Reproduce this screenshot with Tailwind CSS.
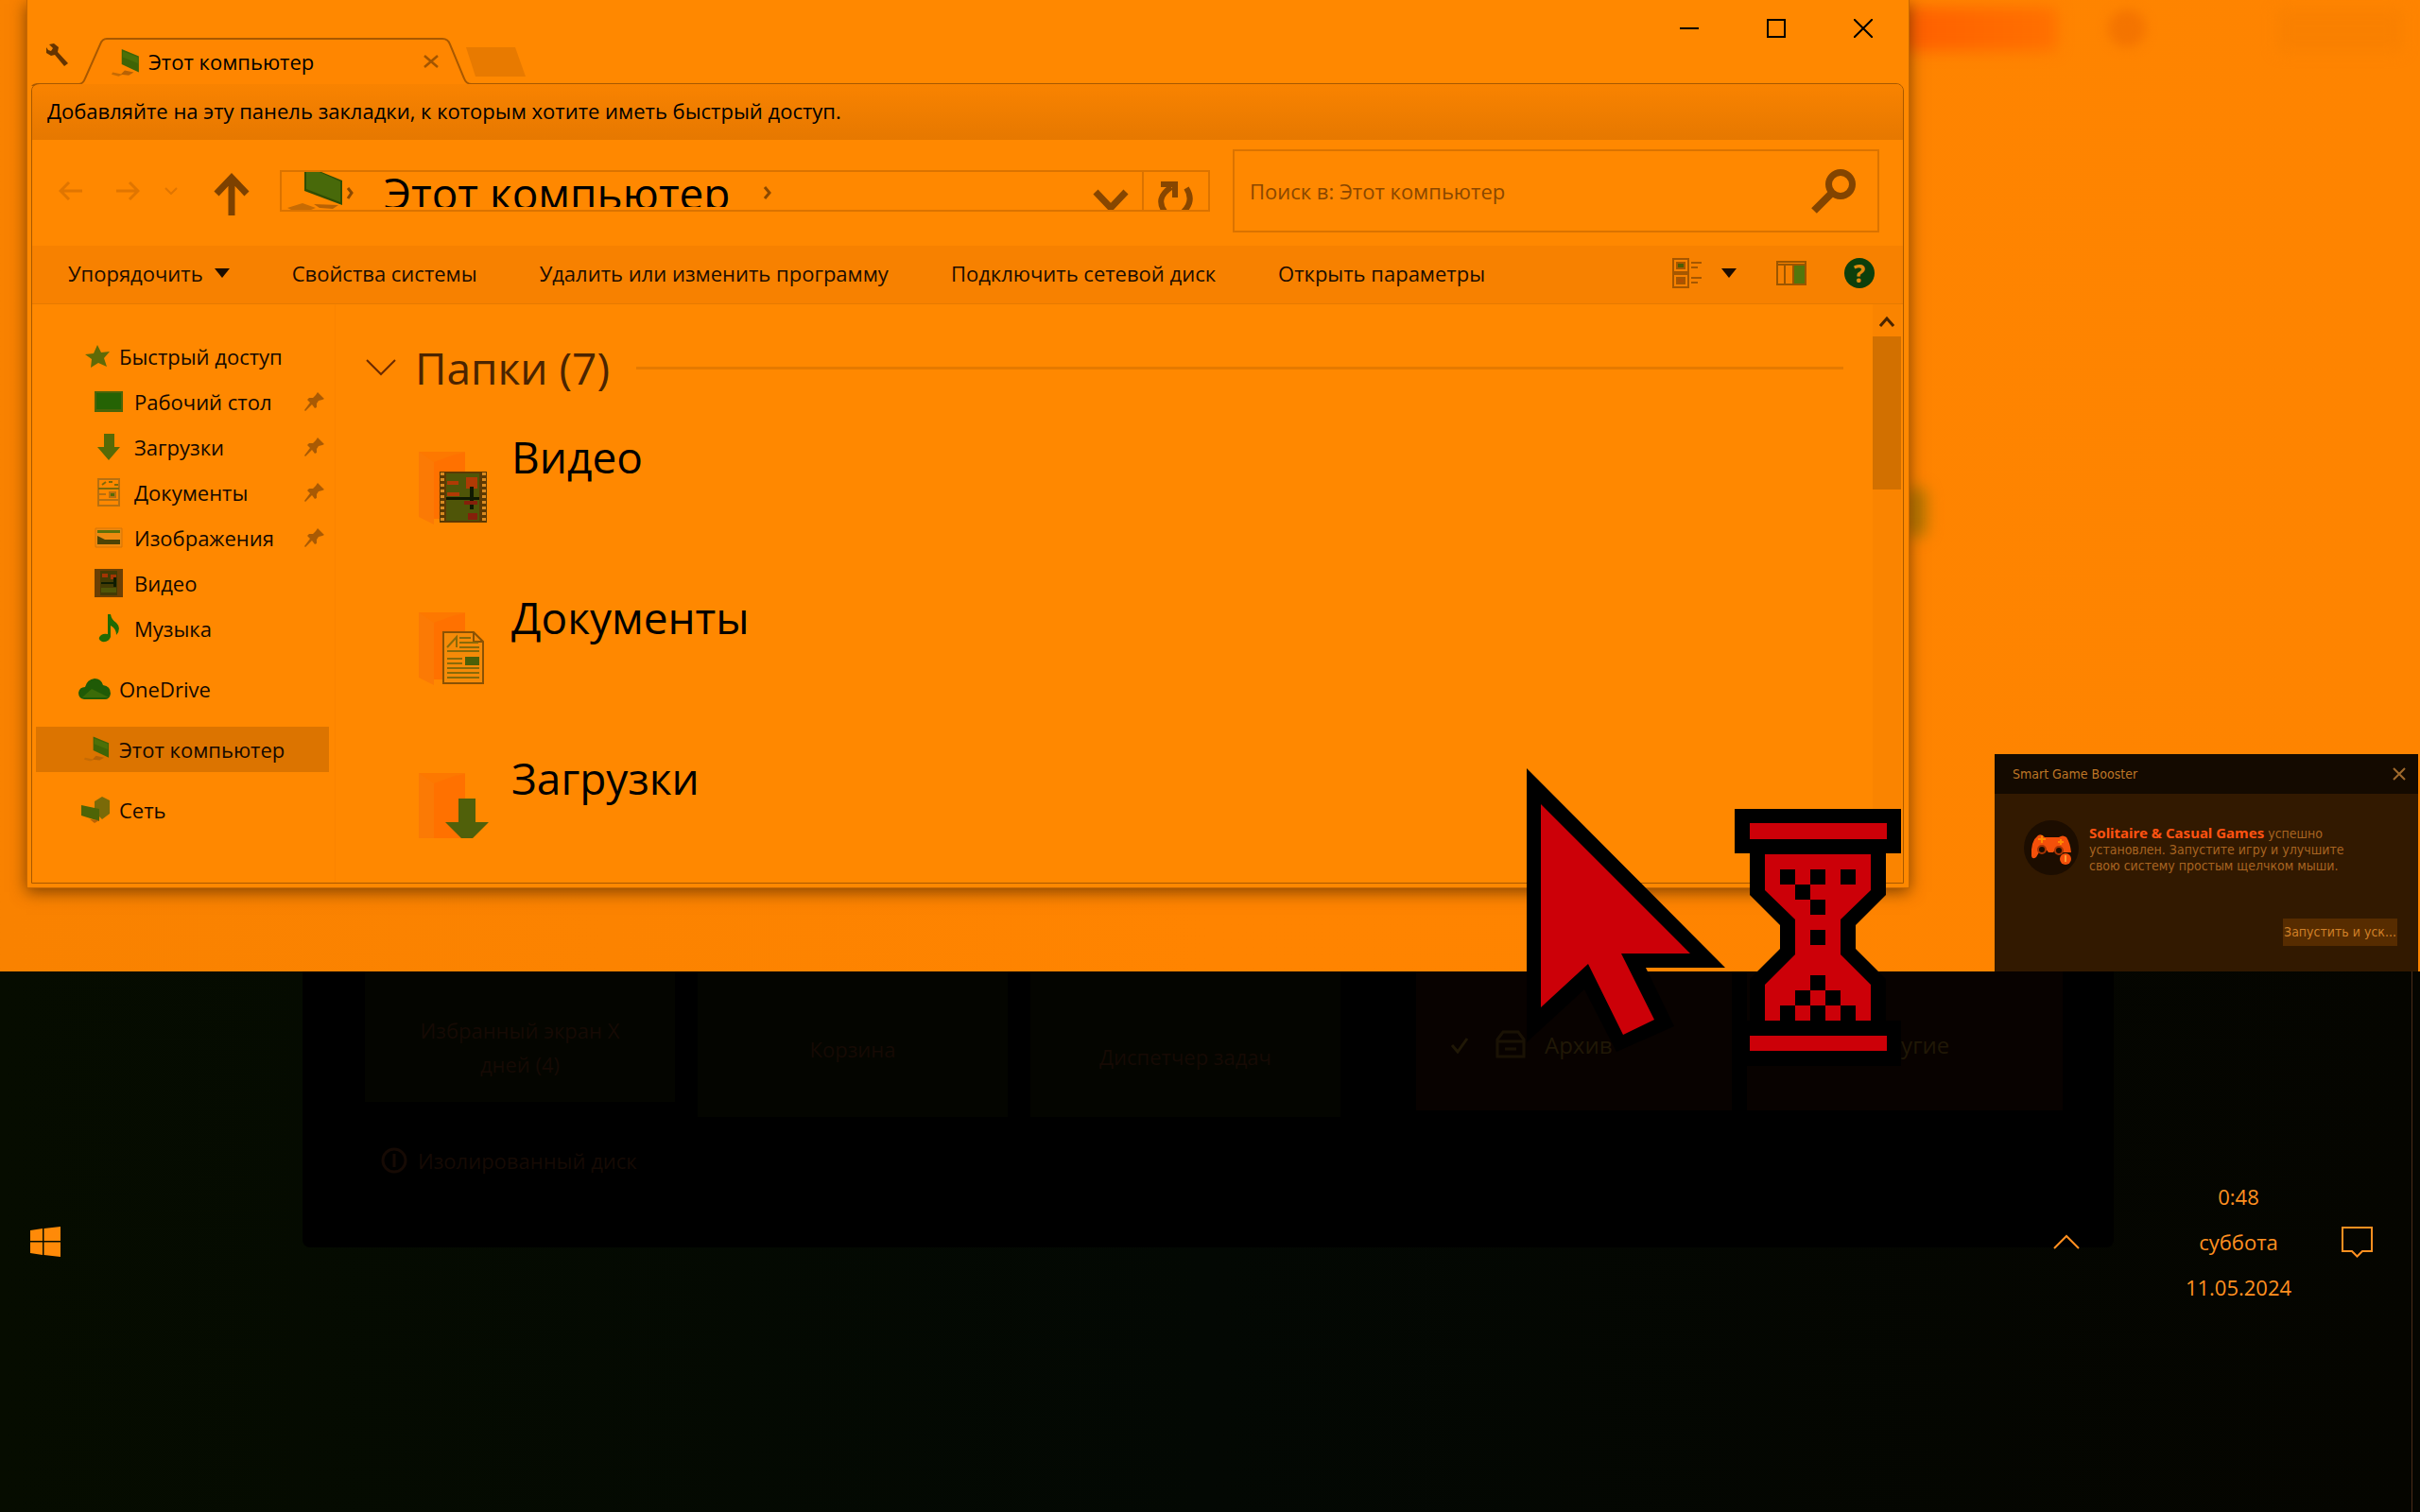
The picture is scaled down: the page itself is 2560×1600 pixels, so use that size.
<!DOCTYPE html>
<html lang="ru">
<head>
<meta charset="utf-8">
<title>Этот компьютер</title>
<script src="https://cdn.jsdelivr.net/npm/@tailwindcss/browser@4"></script>
</head>
<body class="relative flex min-h-screen flex-col overflow-hidden bg-[#050500] font-['Open_Sans','Noto_Sans',sans-serif] text-[22px] leading-[48px] text-[#1c0c00]">

<svg class="hidden" aria-hidden="true">
  <symbol id="pc" viewBox="0 0 30 30">
    <path d="M11 1 28 8v16L11 16z" fill="#3f6406"/><path d="M12 3 27 9v6L12 9z" fill="#4c7008"/>
    <path d="M14 22l9 2-5 3-8-1z" fill="#b86205"/><path d="M2 24l10 2-4 2-7-2z" fill="#c66b04"/>
  </symbol>
  <symbol id="pin" viewBox="0 0 22 22"><path d="M14 1l7 7-2 1-4 1-2 3v4l-2 1-3-4-7 7-1-1 6-8-3-3 2-2 4 0 3-3z" fill="#a95a04"/></symbol>
  <symbol id="folder" viewBox="0 0 52 84">
    <path d="M2 3h49v65H18z" fill="#fd7800"/><path d="M18 14 40 6l11-2v70H18z" fill="#ff7100"/><path d="M2 3 18 14v66L2 72z" fill="#fb7a05"/>
  </symbol>
</svg>

<!-- desktop -->
<main class="relative h-[1028px] overflow-hidden bg-gradient-to-r from-[#f98200] via-[#ff8400] to-[#fe8400]">
  <div class="absolute top-[8px] right-[384px] h-[46px] w-[170px] rounded-md bg-gradient-to-r from-[#ff5f00] to-[#ff7000] blur-[8px]"></div>
  <div class="absolute top-[10px] right-[290px] h-[40px] w-[40px] rounded-full bg-[#f47400] blur-[6px]"></div>
  <div class="absolute top-[10px] right-[20px] h-[44px] w-[130px] bg-[#f98000] blur-[8px]"></div>
  <div class="absolute top-[515px] right-[522px] h-[54px] w-[22px] rounded-full bg-[#b07400] blur-[8px]"></div>

  <!-- explorer window -->
  <section class="absolute top-0 right-[540px] left-[28px] flex h-[940px] flex-col border-r border-b border-l border-[#c86800] bg-[#ff8800] pr-[5px] pb-[4px] pl-[4px] shadow-[0_4px_16px_rgba(80,40,0,0.7)]">
    <header class="relative flex h-[88px] shrink-0">
      <svg class="absolute top-[39px] left-0" width="540" height="52" viewBox="0 0 540 52" fill="none">
        <path d="M460 11h52l11 31h-53z" fill="#e87a00"/>
        <path d="M0 58v-2q0-6 8-6h42q5 0 7-6L73 8q2-6 7-6h355q6 0 8 6l15 36q2 6 8 6h80" fill="#ff8600" stroke="#a85800" stroke-width="2"/>
      </svg>
      <svg class="relative mt-[45px] ml-[14px]" width="26" height="26" viewBox="0 0 26 26" fill="none"><path d="M2 5v6l5 3 4-1 10 12 4-3L14 10l1-5-5-4-5 1 4 4-2 3-3-1z" fill="#653400"/></svg>
      <div class="relative mt-[41px] ml-[44px] flex h-[48px] w-[347px] items-center text-black">
        <svg width="32" height="32" class="mt-1"><use href="#pc"/></svg>
        <span class="ml-[8px]">Этот компьютер</span>
        <button class="ml-auto p-0" aria-label="Закрыть вкладку"><svg width="16" height="14" viewBox="0 0 16 14"><path d="M1 1l14 12M15 1L1 13" stroke="#a35500" stroke-width="2.5"/></svg></button>
      </div>
      <div class="ml-auto flex h-[60px] items-center gap-[72px] pr-[33px]">
        <button aria-label="Свернуть"><svg width="20" height="20"><path d="M0 10h20" stroke="#000" stroke-width="2"/></svg></button>
        <button aria-label="Развернуть"><svg width="20" height="20"><path d="M1 1h18v18H1z" fill="none" stroke="#000" stroke-width="2"/></svg></button>
        <button aria-label="Закрыть"><svg width="20" height="20"><path d="M0 0l20 20M20 0L0 20" stroke="#000" stroke-width="2"/></svg></button>
      </div>
    </header>

    <div class="flex min-h-0 flex-1 flex-col rounded-t-lg border border-[#a85800]">
      <p class="relative h-[59px] shrink-0 overflow-hidden rounded-t-lg bg-gradient-to-b from-[#f98300] to-[#e67800] pl-[16px] leading-[57px] text-black">Добавляйте на эту панель закладки, к которым хотите иметь быстрый доступ.</p>

      <nav class="flex h-[112px] shrink-0 items-center pr-[25px] pb-[4px] pl-[28px]">
        <button aria-label="Назад"><svg width="26" height="20" viewBox="0 0 26 20" fill="none" stroke="#e07500" stroke-width="3"><path d="M25 10H3M11 1L2 10l9 9"/></svg></button>
        <button class="ml-[34px]" aria-label="Вперёд"><svg width="26" height="20" viewBox="0 0 26 20" fill="none" stroke="#e07500" stroke-width="3"><path d="M1 10h22M15 1l9 9-9 9"/></svg></button>
        <button class="ml-[26px]" aria-label="Последние расположения"><svg width="14" height="8" viewBox="0 0 14 8" fill="none" stroke="#e07500" stroke-width="2"><path d="M1 1l6 6 6-6"/></svg></button>
        <button class="mt-[6px] ml-[38px]" aria-label="Вверх"><svg width="38" height="46" viewBox="0 0 38 46" fill="none" stroke="#7d4100" stroke-width="7"><path d="M19 46V6M3 23L19 6l16 17"/></svg></button>
        <div class="ml-[32px] flex h-[44px] min-w-0 flex-1 overflow-hidden border-2 border-[#db7300]">
          <svg class="ml-[6px] shrink-0" width="72" height="42" viewBox="0 0 72 42"><path d="M18 0h18l22 9v26L18 20z" fill="#2f4d04"/><path d="M20 0h14l22 10v22L20 18z" fill="#48690a"/><path d="M64 17l4 5-4 6" fill="none" stroke="#8c4900" stroke-width="3"/><path d="M28 34l26 1-6 4-14-1z" fill="#b86205"/><path d="M0 38l16-5 14 5-10 4H8z" fill="#c66b04"/></svg>
          <span class="ml-[30px] h-[37px] overflow-hidden text-[46px] leading-[64px] whitespace-nowrap text-black"><span class="block -mt-[10px]">Этот компьютер</span></span>
          <svg class="mt-[15px] ml-[34px] shrink-0" width="10" height="14" fill="none" stroke="#8c4900" stroke-width="3"><path d="M2 1l5 6-5 6"/></svg>
          <button class="ml-auto mr-[14px] shrink-0" aria-label="Журнал"><svg width="38" height="40" viewBox="0 0 38 40"><path d="M3 21l16 17 16-17" fill="none" stroke="#874600" stroke-width="7"/></svg></button>
          <button class="flex w-[70px] shrink-0 justify-center border-l-2 border-[#db7300]" aria-label="Обновить"><svg width="42" height="40" viewBox="0 0 42 40" fill="none" stroke="#874600" stroke-width="6"><path d="M10 43Q-2 28 16 16M32 17q9 14-4 26M5 13h15v14"/></svg></button>
        </div>
        <div class="ml-[24px] flex h-[88px] w-[684px] shrink-0 items-center border-2 border-[#db7300] pr-[22px] pl-[16px]">
          <input class="min-w-0 flex-1 bg-transparent outline-none placeholder:text-[#8a4700] placeholder:opacity-100" type="text" aria-label="Поиск" placeholder="Поиск в: Этот компьютер">
          <svg width="48" height="48" viewBox="0 0 48 48" fill="none" stroke="#834400"><circle cx="31" cy="17" r="12.500" stroke-width="7"/><path d="M22 26L3 45" stroke-width="8"/></svg>
        </div>
      </nav>

      <div class="flex h-[62px] shrink-0 items-center border-b border-[#e67a00] bg-[#f78100] pr-[30px] pb-[3px] pl-[38px]">
        <button class="flex items-center gap-[12px]">Упорядочить<svg width="16" height="10"><path d="M0 0h16l-8 10z" fill="#1c0c00"/></svg></button>
        <button class="ml-[66px]">Свойства системы</button>
        <button class="ml-[66px]">Удалить или изменить программу</button>
        <button class="ml-[66px]">Подключить сетевой диск</button>
        <button class="ml-[66px]">Открыть параметры</button>
        <button class="ml-auto flex items-center gap-[20px]" aria-label="Вид"><svg width="32" height="32" viewBox="0 0 32 32" fill="none" stroke="#a65700" stroke-width="2"><path d="M1 1h16v14H1zM1 17h16v14H1zM20 5h11M20 10h7M20 21h11M20 26h7"/><path d="M5 5h8v6H5z" fill="#4e5d04"/><path d="M5 21h8v6H5z" fill="#b04f00"/></svg><svg width="16" height="10"><path d="M0 0h16l-8 10z" fill="#1c0c00"/></svg></button>
        <button class="ml-[42px]" aria-label="Область просмотра"><svg width="32" height="26" viewBox="0 0 32 26" fill="none" stroke="#9c5600" stroke-width="2"><path d="M1 1h30v24H1zM1 4h30M9 4v21M18 4v21"/><path d="M19 5h11v19H19z" fill="#52760c" stroke="none"/></svg></button>
        <button class="ml-[40px] h-[32px] w-[32px] rounded-full bg-[#0d3f0b] text-[26px] leading-[32px] font-bold text-[#e08a10]" aria-label="Справка">?</button>
      </div>

      <div class="flex min-h-0 flex-1">
        <aside class="w-[321px] shrink-0 border-r border-[#fb8400] pt-[31px] pr-[6px] pl-[4px] text-[#140800]">
          <ul>
            <li class="flex h-[48px] items-center pl-[51px]"><svg width="28" height="26" viewBox="0 0 28 26"><path d="M14 1l4 8 9-1-6 7 3 9-9-4-8 5 1-9-7-5 9-1z" fill="#5f6a07"/></svg><a href="#" class="ml-[9px]">Быстрый доступ</a></li>
            <li class="flex h-[48px] items-center pr-[4px] pl-[62px]"><svg width="30" height="24"><path d="M0 1h30v22H0z" fill="#4a6408"/><path d="M2 3h26v17H2z" fill="#256304"/></svg><a href="#" class="ml-[12px]">Рабочий стол</a><svg class="ml-auto" width="22" height="22"><use href="#pin"/></svg></li>
            <li class="flex h-[48px] items-center pr-[4px] pl-[62px]"><svg width="30" height="28"><path d="M10 0h11v14h6L15 28 3 14h7z" fill="#566a06"/></svg><a href="#" class="ml-[12px]">Загрузки</a><svg class="ml-auto" width="22" height="22"><use href="#pin"/></svg></li>
            <li class="flex h-[48px] items-center pr-[4px] pl-[62px]"><svg width="30" height="32" fill="none" stroke="#b87010" stroke-width="2"><path d="M4 2h22v28H4zM4 18h8M4 24h22"/><path d="M4 12h22M8 8l4-3M15 5h4M21 8h4" stroke="#806a08"/><path d="M16 16h6v5h-6z" fill="#566a06"/></svg><a href="#" class="ml-[12px]">Документы</a><svg class="ml-auto" width="22" height="22"><use href="#pin"/></svg></li>
            <li class="flex h-[48px] items-center pr-[4px] pl-[62px]"><svg width="30" height="22"><path d="M1 1h28v20H1z" fill="#ee8a10" stroke="#d87505"/><path d="M3 3h24v3H3z" fill="#607008"/><path d="M3 9l8 4h16v5H3z" fill="#4e4405"/></svg><a href="#" class="ml-[12px]">Изображения</a><svg class="ml-auto" width="22" height="22"><use href="#pin"/></svg></li>
            <li class="flex h-[48px] items-center pl-[62px]"><svg width="30" height="30"><path d="M0 0h30v30H0z" fill="#6b3f04"/><path d="M6 2h18v26H6z" fill="#433b04"/><path d="M8 5h6v4H8zM17 6h6v5h-6z" fill="#a43404"/><path d="M7 14h16v2H7zM20 9h3v10h-3z" fill="#0e1c02"/><path d="M7 20h16v5H7z" fill="#4f5508"/></svg><a href="#" class="ml-[12px]">Видео</a></li>
            <li class="flex h-[48px] items-center pl-[62px]"><svg width="30" height="30"><path d="M14 0h3q1 6 6 9 6 6 0 13 0-7-6-10v12q-2 6-9 5-6-3-1-7 3-2 7-1z" fill="#1f6a04"/></svg><a href="#" class="ml-[12px]">Музыка</a></li>
            <li class="mt-[16px] flex h-[48px] items-center pl-[45px]"><svg width="34" height="22" viewBox="0 0 34 22"><path d="M6 22q-6-1-6-7 1-6 7-6 2-8 10-9 7 0 9 7 8 1 8 9-1 6-6 6z" fill="#1f5a06"/><path d="M4 20l10-9 18 9z" fill="#3a6b08"/></svg><a href="#" class="ml-[9px]">OneDrive</a></li>
            <li class="mt-[16px] flex h-[48px] items-center bg-[#dc7400] pl-[50px]"><svg width="29" height="30"><use href="#pc"/></svg><a href="#" class="ml-[9px]">Этот компьютер</a></li>
            <li class="mt-[16px] flex h-[48px] items-center pl-[48px]"><svg width="31" height="30" viewBox="0 0 31 30"><path d="M14 6l8-5 8 4v14l-8 6-8-8z" fill="#7a6a08"/><path d="M0 10l19 4v13L0 21z" fill="#4d6406"/><path d="M9 25l10 1-5 3z" fill="#b86205"/></svg><a href="#" class="ml-[9px]">Сеть</a></li>
          </ul>
        </aside>

        <div class="flex h-[565px] min-w-0 flex-1 flex-col overflow-hidden pt-[33px] pr-[31px] pl-[32px] text-[46px] leading-[68px] text-black">
          <h2 class="flex h-[68px] shrink-0 items-center text-[#4b2400]">
            <svg width="32" height="18" fill="none" stroke="#6b2a00" stroke-width="2"><path d="M1 1l15 15L31 1"/></svg>
            <span class="ml-[20px]">Папки (7)</span><span class="ml-[28px] h-[3px] flex-1 bg-[#e67a00]"></span>
          </h2>
          <article class="mt-[26px] flex h-[170px] shrink-0 pl-[54px]">
            <svg class="mt-[26px] shrink-0" width="80" height="88" viewBox="0 0 80 88"><use href="#folder" width="52" height="84"/><path d="M24 24h50v54H24z" fill="#5c3903"/><path d="M31 26h35v50H31z" fill="#4f5508"/><path d="M32 34h12v4H32zM52 30h12v12H52zM32 46h13v4H32z" fill="#b03a04"/><path d="M31 51h35v3H31zM56 40h4v24h-4z" fill="#101a02"/><path d="M50 55h14v4H50zM54 68h10v7H54z" fill="#85200a"/><path d="M27 25v52M71 25v52" stroke="#d98a20" stroke-width="4" stroke-dasharray="3 3"/></svg>
            <a href="#" class="ml-[20px]">Видео</a>
          </article>
          <article class="flex h-[170px] shrink-0 pl-[54px]">
            <svg class="mt-[26px] shrink-0" width="80" height="88" viewBox="0 0 80 88"><use href="#folder" width="52" height="84"/><path d="M28 24h32l10 10v44H28z" fill="#f58a08" stroke="#8a5204" stroke-width="2"/><path d="M60 24v10h10" fill="none" stroke="#8a5204" stroke-width="2"/><path d="M32 40l10-11v11M45 30h12M45 35h20M45 40h21M32 44h34M32 52h16M32 57h16M32 62h34M32 67h34M32 72h34" fill="none" stroke="#8a6a08" stroke-width="2"/><path d="M51 50h15v9H51z" fill="#4c6008"/></svg>
            <a href="#" class="ml-[20px]">Документы</a>
          </article>
          <article class="flex h-[170px] shrink-0 pl-[54px]">
            <svg class="mt-[26px] shrink-0" width="80" height="88" viewBox="0 0 80 88"><use href="#folder" width="52" height="84"/><path d="M44 30h18v25h14L53 78 30 55h14z" fill="#50600a"/></svg>
            <a href="#" class="ml-[20px]">Загрузки</a>
          </article>
        </div>

        <div class="mr-[2px] flex w-[30px] shrink-0 flex-col items-center bg-[#fa8400]">
          <svg class="mt-[12px]" width="16" height="12" fill="none" stroke="#4a2500" stroke-width="3"><path d="M1 11l7-8 7 8"/></svg>
          <div class="mt-[10px] h-[162px] w-full bg-[#d27000]"></div>
        </div>
      </div>
    </div>
  </section>

  <!-- notification -->
  <section class="absolute right-[2px] bottom-0 flex h-[230px] w-[448px] flex-col bg-[#321900] font-['DejaVu_Sans_Condensed','Noto_Sans',sans-serif] text-[14px] leading-[17px] text-[#a86420]">
    <header class="flex h-[42px] items-center justify-between bg-[#140a00] pr-[13px] pl-[19px] text-[#bd7626]"><span>Smart Game Booster</span>
      <button aria-label="Закрыть"><svg width="14" height="14"><path d="M1 1l12 12M13 1L1 13" stroke="#a06a2c" stroke-width="2"/></svg></button>
    </header>
    <div class="flex flex-1 pt-[28px] pl-[31px]">
      <svg width="58" height="58" viewBox="0 0 58 58"><circle cx="29" cy="29" r="29" fill="#1c0d00"/><path d="M8 38q-1-16 7-22 4-2 7 2h15q4-3 8 0 4 6 5 16H40q-6-6-9 0h-5q-3-6-10 0l-3 5q-4 3-5-1z" fill="#f4500a"/><circle cx="19" cy="31" r="4" fill="#1c0d00" stroke="#a83404" stroke-width="2"/><circle cx="37" cy="32" r="4" fill="#1c0d00" stroke="#a83404" stroke-width="2"/><path d="M19 16v8M15 20h8M36 23h6M39 20v6" stroke="#ff8800" stroke-width="2"/><circle cx="44" cy="41" r="6" fill="#f4500a"/><path d="M44 37v7" stroke="#ff9a30" stroke-width="2"/></svg>
      <p class="mt-[5px] ml-[11px] w-[290px]"><b class="font-['Noto_Sans'] text-[15px] leading-[17px] text-[#ff5212]">Solitaire &amp; Casual Games</b> успешно<br>установлен. Запустите игру и улучшите<br>свою систему простым щелчком мыши.</p>
    </div>
    <button class="mr-[22px] mb-[27px] ml-auto h-[29px] w-[121px] bg-[#572c00] whitespace-nowrap text-[#d08028]">Запустить и уск...</button>
  </section>
</main>

<!-- darkened lower part -->
<div class="relative flex flex-1 flex-col bg-gradient-to-r from-[#060c00] via-[#030803] to-[#050500]">
  <div class="mr-[324px] ml-[320px] h-[292px] rounded-b-lg bg-black pl-[66px] text-[#160a04]">
    <div class="flex items-start gap-[24px] text-center leading-[36px]">
      <div class="h-[138px] w-[328px] bg-[#040500] pt-[44px]">Избранный экран X<br>дней (4)</div>
      <div class="h-[154px] w-[328px] bg-[#040500] pt-[64px]">Корзина</div>
      <div class="h-[154px] w-[328px] bg-[#040500] pt-[72px]">Диспетчер задач</div>
      <div class="ml-[56px] flex h-[147px] w-[334px] items-center gap-[20px] bg-[#080200] pt-[8px] pl-[36px] text-[24px] text-[#201806]"><svg width="20" height="18" fill="none" stroke="#201806" stroke-width="3"><path d="M2 9l6 7L18 2"/></svg><svg class="ml-[8px]" width="32" height="32" fill="none" stroke="#1a1204" stroke-width="3"><path d="M2 10l6-8h16l6 8v18H2zM2 12h28M10 20h12"/></svg>Архив</div>
      <div class="-ml-[8px] flex h-[147px] w-[334px] items-center bg-[#080200] pt-[8px] pl-[132px] text-[24px] text-[#201806]">Другие</div>
    </div>
    <p class="mt-[22px] flex items-center gap-[10px] pl-[16px]"><svg width="30" height="30" fill="none" stroke="#160a04" stroke-width="3"><circle cx="15" cy="15" r="12"/><path d="M15 8v14"/></svg>Изолированный диск</p>
  </div>
  <footer class="absolute top-[214px] right-0 left-0 flex h-[144px] items-center pr-[50px] pl-[32px] text-[#ff9020]">
    <button aria-label="Пуск"><svg width="32" height="32" viewBox="0 0 32 32" fill="#ff8a08"><path d="M0 4l13-2v13H0zM14.500 2L32 0v15H14.500zM0 16.500h13V30L0 28zM14.500 16.500H32V32l-17.500-2z"/></svg></button>
    <button class="ml-auto" aria-label="Скрытые значки"><svg width="28" height="16" fill="none" stroke="#ff9020" stroke-width="2"><path d="M1 15L14 2l13 13"/></svg></button>
    <time class="ml-[103px] w-[130px] text-center" datetime="2024-05-11T00:48">0:48<br>суббота<br>11.05.2024</time>
    <button class="ml-[44px]" aria-label="Уведомления"><svg width="33" height="33" fill="none" stroke="#ff9020" stroke-width="2"><path d="M1 1h31v25H22l-5.500 5.500L11 26H1z"/></svg></button>
  </footer>
  <div class="absolute top-0 right-[8px] bottom-0 w-px bg-[#4a2c18]"></div>
</div>

<!-- pointer with hourglass -->
<svg class="absolute top-[812px] right-[540px]" width="405" height="320" viewBox="1615 812 405 320" aria-hidden="true">
  <path d="M1615 813l210 211h-84l30 62-61 27-34-66-61 56z" fill="#000"/>
  <path d="M1630 851l158 158h-73l35 70-33 16-37-75-50 46z" fill="#cc0008"/>
  <path d="M1835 856h176v47h-16v44l-32 32v25l32 32v44h16v48h-176v-48h16v-44l32-32v-25l-32-32v-44h-16z" fill="#000"/>
  <path d="M1851 871h145v17h-145zM1851 1096h145v16h-145zM1867 904h112v38l-32 31v37l32 32v38h-112v-38l32-32v-37l-32-31z" fill="#cc0008"/>
  <path d="M1883 920h16v16h-16zM1915 920h16v16h-16zM1947 920h16v16h-16zM1899 936h16v16h-16zM1915 952h16v16h-16zM1915 984h16v16h-16zM1915 1032h16v16h-16zM1899 1048h16v16h-16zM1931 1048h16v16h-16zM1883 1064h16v16h-16zM1915 1064h16v16h-16zM1947 1064h16v16h-16z" fill="#000"/>
</svg>
</body>
</html>
